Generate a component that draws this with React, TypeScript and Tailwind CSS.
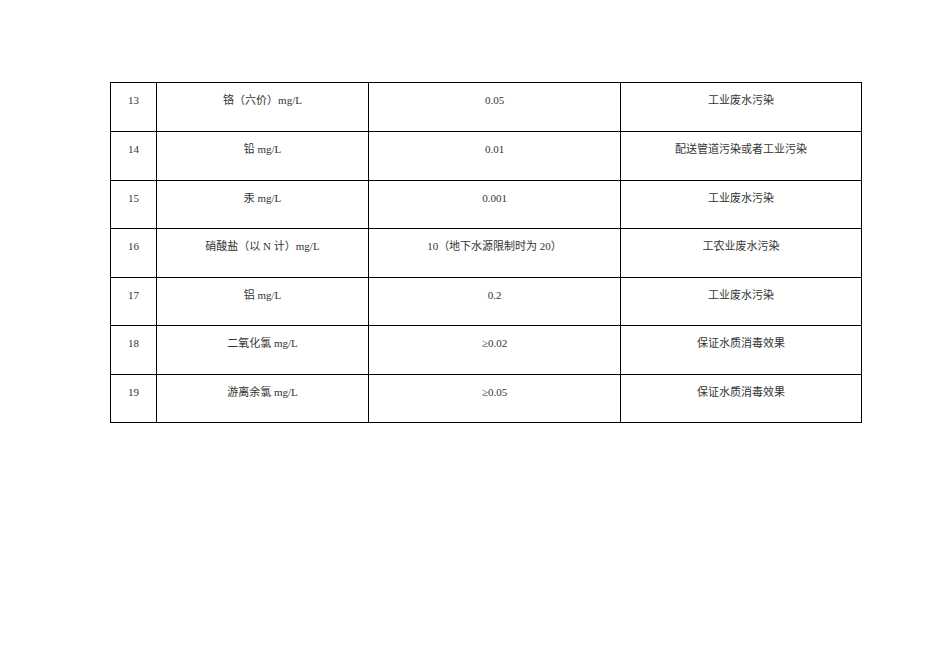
const ROWS = [
  { no: "13", item: "铬（六价）mg/L", limit: "0.05", cause: "工业废水污染", h: "h-[49px]" },
  { no: "14", item: "铅 mg/L", limit: "0.01", cause: "配送管道污染或者工业污染", h: "h-[49px]" },
  { no: "15", item: "汞 mg/L", limit: "0.001", cause: "工业废水污染", h: "h-[48px]" },
  { no: "16", item: "硝酸盐（以 N 计）mg/L", limit: "10（地下水源限制时为 20）", cause: "工农业废水污染", h: "h-[49px]" },
  { no: "17", item: "铝 mg/L", limit: "0.2", cause: "工业废水污染", h: "h-[48px]" },
  { no: "18", item: "二氧化氯 mg/L", limit: "≥0.02", cause: "保证水质消毒效果", h: "h-[49px]" },
  { no: "19", item: "游离余氯 mg/L", limit: "≥0.05", cause: "保证水质消毒效果", h: "h-[48px]" },
];

const cell = "border-r border-b border-black text-center pt-[11px] leading-[13px]";

const App = () => {
  return (
    <div className="w-[936px] h-[662px] bg-white pt-[82px] pl-[110px] font-['Liberation_Serif','Noto_Sans_CJK_SC',serif] text-[11px] text-[#333]">
      <div className="w-[752px] border-l border-t border-black">
        {ROWS.map((row) => (
          <div key={row.no} className={`flex ${row.h}`}>
            <div className={`${cell} w-[46px]`}>{row.no}</div>
            <div className={`${cell} w-[212px]`}>{row.item}</div>
            <div className={`${cell} w-[252px]`}>{row.limit}</div>
            <div className={`${cell} w-[241px]`}>{row.cause}</div>
          </div>
        ))}
      </div>
    </div>
  );
};

export default App;
